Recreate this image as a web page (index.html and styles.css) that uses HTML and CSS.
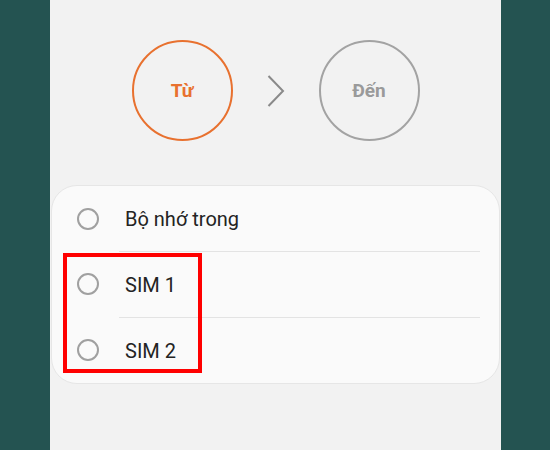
FILE: index.html
```html
<!DOCTYPE html>
<html lang="vi">
<head>
    <meta charset="UTF-8">
    <meta name="viewport" content="width=device-width, initial-scale=1.0">
    <title>Chuyển danh bạ</title>
    <link rel="stylesheet" href="styles.css">
</head>
<body>

<div class="screen">
    <div class="steps">
        <div class="step active">Từ</div>
        <svg class="chevron" width="18" height="32" viewBox="0 0 18 32">
            <polyline points="1.5,1 16,16 1.5,31" fill="none" stroke="#8a8a8a" stroke-width="2"/>
        </svg>
        <div class="step">Đến</div>
    </div>

    <div class="card">
        <div class="option">
            <span class="radio"></span>
            <div class="label">Bộ nhớ trong</div>
        </div>
        <div class="option">
            <span class="radio"></span>
            <div class="label divided">SIM 1</div>
        </div>
        <div class="option">
            <span class="radio"></span>
            <div class="label divided">SIM 2</div>
        </div>
    </div>

    <div class="highlight"></div>
</div>

</body>
</html>
```

FILE: styles.css
```css
body {
    margin: 0;
    height: 450px;
    background-color: #245351;
    font-family: Roboto, "Noto Sans", sans-serif;
    overflow: hidden;
}

.screen {
    position: relative;
    width: 451px;
    height: 450px;
    margin-left: 50px;
    background-color: #f2f2f2;
}

.steps {
    display: flex;
    justify-content: center;
    align-items: center;
    gap: 34px;
    padding-top: 40px;
}

.step {
    width: 101px;
    height: 101px;
    box-sizing: border-box;
    border: 2px solid #a3a3a3;
    border-radius: 50%;
    display: flex;
    justify-content: center;
    align-items: center;
    font-size: 19px;
    font-weight: bold;
    color: #9a9a9a;
}

.step.active {
    border-color: #e8712f;
    color: #e8712f;
}

.chevron {
    display: block;
}

.card {
    margin: 44px 1px 0;
    background-color: #fafafa;
    border: 1px solid #e6e6e6;
    border-radius: 26px;
}

.option {
    display: flex;
    align-items: center;
    padding-left: 25px;
}

.radio {
    width: 22px;
    height: 22px;
    box-sizing: border-box;
    border: 2px solid #a0a0a0;
    border-radius: 50%;
    flex-shrink: 0;
}

.label {
    flex: 1;
    height: 65px;
    margin-left: 20px;
    margin-right: 19px;
    padding-left: 6px;
    display: flex;
    align-items: center;
    font-size: 20px;
    color: #232323;
}

.label.divided {
    border-top: 1px solid #e3e3e3;
}

.highlight {
    position: absolute;
    left: 13px;
    top: 253px;
    width: 139px;
    height: 120px;
    box-sizing: border-box;
    border: 4px solid #ff0000;
}
```
